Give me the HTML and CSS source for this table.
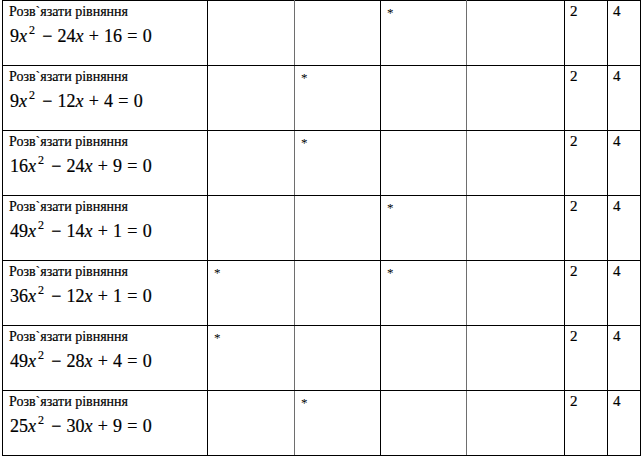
FILE: index.html
```html
<!DOCTYPE html>
<html>
<head>
<meta charset="utf-8">
<link rel="stylesheet" href="styles.css">
</head>
<body>
<table class="grid">
  <colgroup>
    <col class="c1"><col class="c2"><col class="c3"><col class="c4"><col class="c5"><col class="c6"><col class="c7">
  </colgroup>
  <tr>
    <td><div class="task">Розв`язати рівняння</div><div class="eq">9<i>x</i><sup>2</sup> − 24<i>x</i> + 16 = 0</div></td>
    <td></td><td></td><td><span class="star">*</span></td><td></td><td class="num">2</td><td class="num">4</td>
  </tr>
  <tr>
    <td><div class="task">Розв`язати рівняння</div><div class="eq">9<i>x</i><sup>2</sup> − 12<i>x</i> + 4 = 0</div></td>
    <td></td><td><span class="star">*</span></td><td></td><td></td><td class="num">2</td><td class="num">4</td>
  </tr>
  <tr>
    <td><div class="task">Розв`язати рівняння</div><div class="eq">16<i>x</i><sup>2</sup> − 24<i>x</i> + 9 = 0</div></td>
    <td></td><td><span class="star">*</span></td><td></td><td></td><td class="num">2</td><td class="num">4</td>
  </tr>
  <tr>
    <td><div class="task">Розв`язати рівняння</div><div class="eq">49<i>x</i><sup>2</sup> − 14<i>x</i> + 1 = 0</div></td>
    <td></td><td></td><td><span class="star">*</span></td><td></td><td class="num">2</td><td class="num">4</td>
  </tr>
  <tr>
    <td><div class="task">Розв`язати рівняння</div><div class="eq">36<i>x</i><sup>2</sup> − 12<i>x</i> + 1 = 0</div></td>
    <td><span class="star">*</span></td><td></td><td><span class="star">*</span></td><td></td><td class="num">2</td><td class="num">4</td>
  </tr>
  <tr>
    <td><div class="task">Розв`язати рівняння</div><div class="eq">49<i>x</i><sup>2</sup> − 28<i>x</i> + 4 = 0</div></td>
    <td><span class="star">*</span></td><td></td><td></td><td></td><td class="num">2</td><td class="num">4</td>
  </tr>
  <tr>
    <td><div class="task">Розв`язати рівняння</div><div class="eq">25<i>x</i><sup>2</sup> − 30<i>x</i> + 9 = 0</div></td>
    <td></td><td><span class="star">*</span></td><td></td><td></td><td class="num">2</td><td class="num">4</td>
  </tr>
</table>
</body>
</html>
```

FILE: styles.css
```css
html, body {
  margin: 0;
  padding: 0;
  background: #fff;
}
body {
  padding: 0 0 0 2px;
  font-family: "Liberation Serif", "Times New Roman", Times, serif;
  color: #000;
}
.grid {
  border-collapse: collapse;
  table-layout: fixed;
  width: 639px;
}
.c1 { width: 205px; }
.c2 { width: 87px; }
.c3 { width: 86px; }
.c4 { width: 86px; }
.c5 { width: 98px; }
.c6 { width: 43px; }
.c7 { width: 33px; }
.grid tr { height: 65px; }
.grid td {
  border: 1px solid #000;
  vertical-align: top;
  padding: 2px 5px 0 5px;
  height: 63px;
  box-sizing: border-box;
}
.grid td:nth-child(2) { border-right-color: #6e6e6e; }
.grid td:nth-child(3) { border-left-color: #6e6e6e; }
.grid td:nth-child(4) { border-right-color: #6e6e6e; }
.grid td:nth-child(5) { border-left-color: #6e6e6e; }
.task {
  font-size: 14px;
  line-height: 17px;
  padding-left: 1px;
  -webkit-text-stroke: 0.2px #000;
}
.eq {
  font-size: 18px;
  line-height: 22px;
  margin-top: 5px;
  padding-left: 2px;
  white-space: nowrap;
  word-spacing: 0.7px;
  -webkit-text-stroke: 0.2px #000;
}
.eq sup {
  font-size: 12px;
  line-height: 0;
  vertical-align: 8px;
  margin-left: 2px;
  margin-right: 2px;
}
.star {
  font-size: 13px;
  line-height: 12px;
  display: inline-block;
  padding: 0 0 0 1px;
}
.num {
  font-size: 15px;
  line-height: 17px;
  -webkit-text-stroke: 0.2px #000;
}
```
